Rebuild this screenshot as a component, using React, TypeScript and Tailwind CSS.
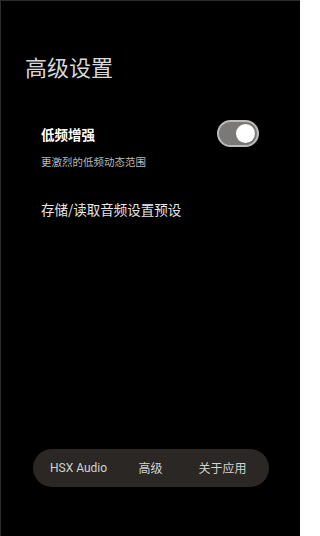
import { useState } from "react";

const font = { fontFamily: '"Noto Sans CJK SC", "Noto Sans", sans-serif' };

function Toggle({ on, onChange }: { on: boolean; onChange: (v: boolean) => void }) {
  return (
    <button
      type="button"
      role="switch"
      aria-checked={on}
      onClick={() => onChange(!on)}
      className={`flex h-[27px] w-[42px] items-center rounded-full border-2 border-[#bdbbb9] p-[2px] ${
        on ? "justify-end bg-[#7b7977]" : "justify-start bg-[#3a3938]"
      }`}
    >
      <span className="h-[19px] w-[19px] rounded-full bg-white" />
    </button>
  );
}

export default function App() {
  const [bass, setBass] = useState(true);

  return (
    <div
      className="flex h-[536px] w-[300px] flex-col border-l border-t border-[#2c2c2c] bg-black"
      style={font}
    >
      {/* Header */}
      <h1 className="mt-[49px] pl-[24px] text-[22px] leading-[32px] text-[#d8d8d8]">高级设置</h1>

      {/* Settings */}
      <div className="mt-[38px] pl-[40px] pr-[41px]">
        <div className="flex items-center justify-between">
          <span className="text-[13.5px] font-bold leading-[20px] text-white">低频增强</span>
          <Toggle on={bass} onChange={setBass} />
        </div>
        <p className="mt-[8px] text-[10.5px] leading-[14px] text-[#b8b8b8]">更激烈的低频动态范围</p>

        <button type="button" className="mt-[30px] block text-left text-[13.5px] leading-[20px] text-[#e6e6e6]">
          存储/读取音频设置预设
        </button>
      </div>

      <div className="flex-1" />

      {/* Bottom nav */}
      <nav className="mx-auto mb-[49px] grid h-[38px] w-[236px] grid-cols-3 items-center rounded-full bg-[#2a2725] px-[10px] text-center text-[12px] text-[#d2d2d2]">
        <span style={{ fontFamily: 'Roboto, "Noto Sans CJK SC", sans-serif' }}>HSX Audio</span>
        <span>高级</span>
        <span>关于应用</span>
      </nav>
    </div>
  );
}
